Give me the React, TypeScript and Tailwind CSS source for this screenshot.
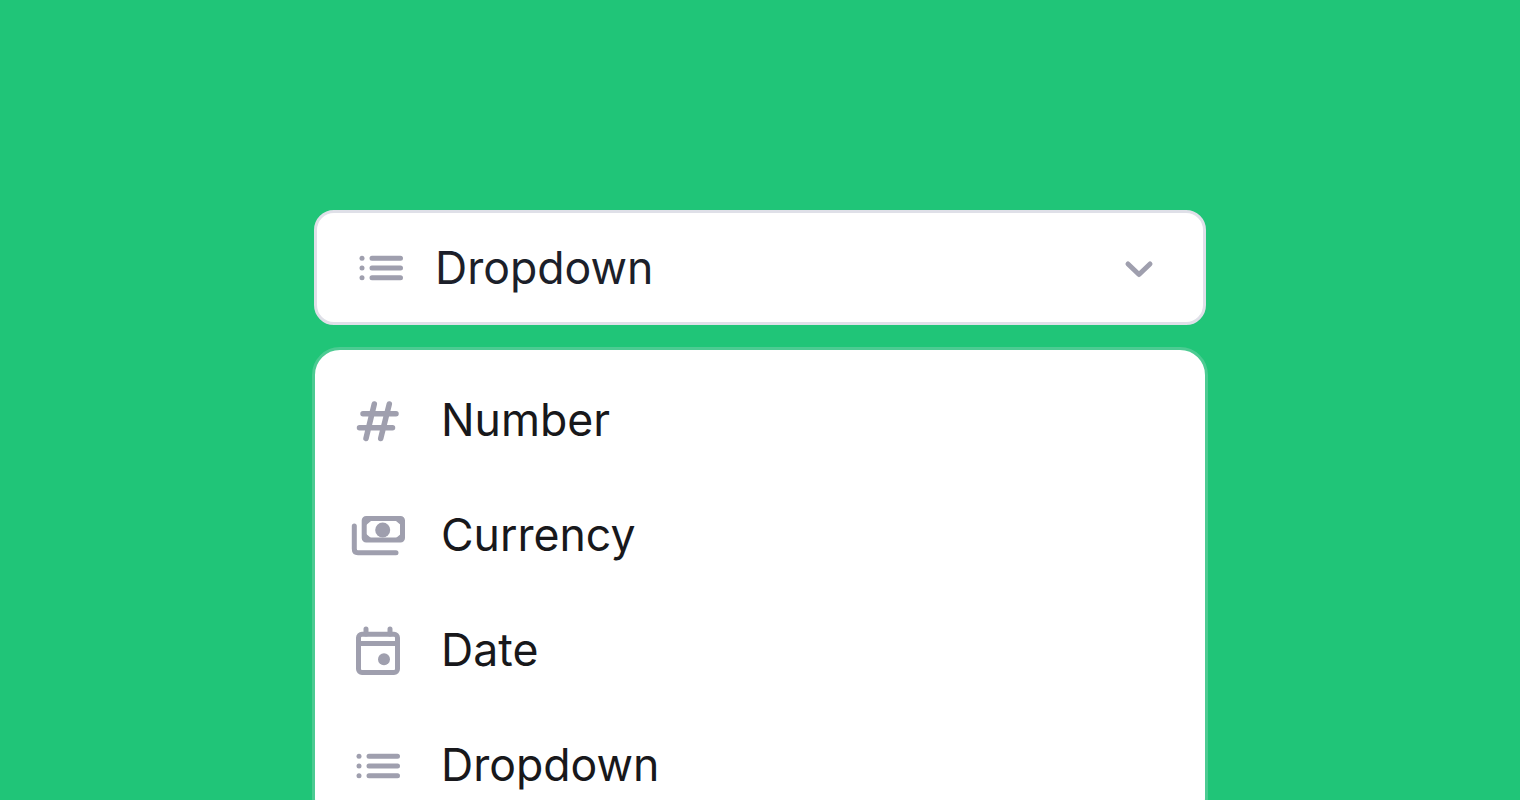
function ListIcon() {
  return (
    <svg width="56" height="56" viewBox="0 0 56 56" fill="none" className="shrink-0">
      <circle cx="9" cy="18.3" r="2.5" fill="#9f9fae" />
      <circle cx="9" cy="28" r="2.5" fill="#9f9fae" />
      <circle cx="9" cy="37.7" r="2.5" fill="#9f9fae" />
      <path d="M19 18.3H47.5M19 28H47.5M19 37.7H47.5" stroke="#9f9fae" strokeWidth="5" strokeLinecap="round" />
    </svg>
  )
}

function HashIcon() {
  return (
    <svg width="56" height="56" viewBox="0 0 56 56" fill="none" className="shrink-0">
      <path
        d="M13 20.7H46M9.5 34.7H42.5M24.3 11L16 45.5M39.3 11L30.7 45.5"
        stroke="#9f9fae"
        strokeWidth="5.5"
        strokeLinecap="round"
      />
    </svg>
  )
}

function MoneyIcon() {
  return (
    <svg width="56" height="56" viewBox="0 0 56 56" fill="none" className="shrink-0">
      <rect x="14.2" y="10.5" width="38.3" height="21.5" rx="2" stroke="#9f9fae" strokeWidth="5" />
      <circle cx="32.7" cy="22" r="7.5" fill="#9f9fae" />
      <path d="M15 13H21L15 18ZM52 13H46L52 18ZM15 30H21L15 25ZM52 30H46L52 25Z" fill="#9f9fae" />
      <path d="M4.3 18V40.7C4.3 43 5.5 44.7 8 44.7H46" stroke="#9f9fae" strokeWidth="5" strokeLinecap="round" />
    </svg>
  )
}

function CalendarIcon() {
  return (
    <svg width="56" height="56" viewBox="0 0 56 56" fill="none" className="shrink-0">
      <rect x="8.5" y="11.2" width="39" height="38.3" rx="3.5" stroke="#9f9fae" strokeWidth="5" />
      <path d="M16 6V11M40 6V11" stroke="#9f9fae" strokeWidth="5" strokeLinecap="round" />
      <path d="M8.5 20.5H47.5" stroke="#9f9fae" strokeWidth="5" />
      <circle cx="34" cy="36.3" r="6" fill="#9f9fae" />
    </svg>
  )
}

const items = [
  { name: 'Number', icon: <HashIcon /> },
  { name: 'Currency', icon: <MoneyIcon /> },
  { name: 'Date', icon: <CalendarIcon /> },
  { name: 'Dropdown', icon: <ListIcon /> },
]

export default function App() {
  return (
    <div className="h-screen overflow-hidden bg-[#20c578] pt-[210px] flex flex-col items-center font-['Inter',sans-serif]">
      <div className="w-[892px] h-[115px] shrink-0 bg-white border-[3px] border-[#dfe0e8] rounded-[20px] flex items-center pl-[36px] pr-[48px]">
        <ListIcon />
        <span className="ml-[26px] mt-[2px] text-[44.6px] text-[#1c1f2a]">Dropdown</span>
        <svg width="32" height="32" viewBox="0 0 32 32" fill="none" className="ml-auto">
          <path d="M5 12L16 22.5L27 12" stroke="#9f9fae" strokeWidth="5" strokeLinecap="round" strokeLinejoin="round" />
        </svg>
      </div>
      <div className="mt-[22px] w-[896px] shrink-0 bg-white border-[3px] border-[#4ccb92] rounded-[28px] pt-[13px] pl-[35px]">
        {items.map(item => (
          <div key={item.name} className="h-[115px] flex items-center">
            {item.icon}
            <span className="ml-[35px] text-[44.6px] text-[#18181b]">{item.name}</span>
          </div>
        ))}
      </div>
    </div>
  )
}
